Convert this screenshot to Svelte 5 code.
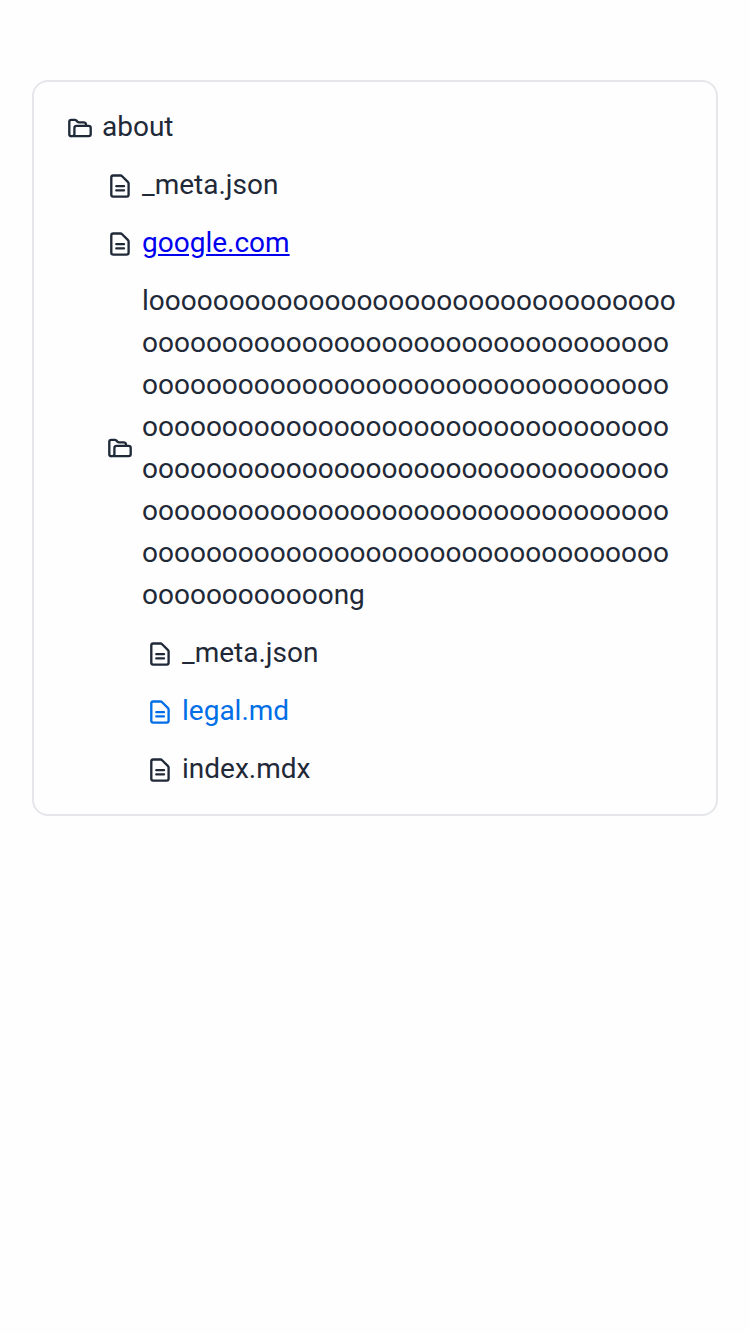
<script>
  const rows = [
    { kind: 'folder', name: 'about', depth: 0 },
    { kind: 'file', name: '_meta.json', depth: 1 },
    { kind: 'file', name: 'google.com', depth: 1, link: true },
    { kind: 'folder', name: 'l' + 'o'.repeat(243) + 'ng', depth: 1, wraps: true },
    { kind: 'file', name: '_meta.json', depth: 2 },
    { kind: 'file', name: 'legal.md', depth: 2, active: true },
    { kind: 'file', name: 'index.mdx', depth: 2 },
  ];
</script>

<div class="tree">
  {#each rows as row}
    <div class="row" class:active={row.active} class:wraps={row.wraps} style="margin-left: {row.depth * 40}px">
      <svg viewBox="0 0 28 28" width="28" height="28" aria-hidden="true">
        {#if row.kind === 'folder'}
          <path d="M5.3 22.2Q3.3 22.2 3.3 20.2V7.8Q3.3 5.8 5.3 5.8H8.8Q9.6 5.8 10.2 6.4L11.4 7.6Q12.2 8.4 13 8.4H17.6Q20 8.4 20 10.8V11.6" />
          <path d="M5.3 22.2H22.6Q24.7 22.2 24.7 20.1V13.9Q24.7 11.8 22.6 11.8H10.5Q8.4 11.8 8.4 13.9V20.1Q8.4 22.2 6.3 22.2" />
        {:else}
          <path d="M7.2 3.5H14.5Q15.4 3.5 16.1 4.2L21.8 9.9Q22.6 10.7 22.6 11.6V22.7Q22.6 24.6 20.7 24.6H7.2Q5.3 24.6 5.3 22.7V5.4Q5.3 3.5 7.2 3.5Z" />
          <path d="M10.3 14.2H18M10.3 18.4H18" />
        {/if}
      </svg>
      {#if row.link}
        <a class="name" href="https://google.com">{row.name}</a>
      {:else}
        <span class="name">{row.name}</span>
      {/if}
    </div>
  {/each}
</div>

<style>
  :global(body) {
    background: #fefefe;
  }
  .tree {
    box-sizing: border-box;
    margin: 80px 32px;
    padding: 16px 32px;
    border: 2px solid #e5e7eb;
    border-radius: 16px;
    color: #1f2937;
    font: 28px/42px Roboto, sans-serif;
  }
  .row {
    display: flex;
    align-items: center;
    gap: 8px;
    padding: 8px 0;
  }
  .active {
    color: #006ee6;
  }
  svg {
    flex: none;
    margin-top: 2px;
    fill: none;
    stroke: currentColor;
    stroke-width: 2.33;
    stroke-linecap: round;
    stroke-linejoin: round;
  }
  .wraps svg {
    margin-top: 0;
  }
  .name {
    min-width: 0;
    overflow-wrap: anywhere;
  }
  a {
    color: #0000ee;
    text-decoration: underline;
  }
</style>
